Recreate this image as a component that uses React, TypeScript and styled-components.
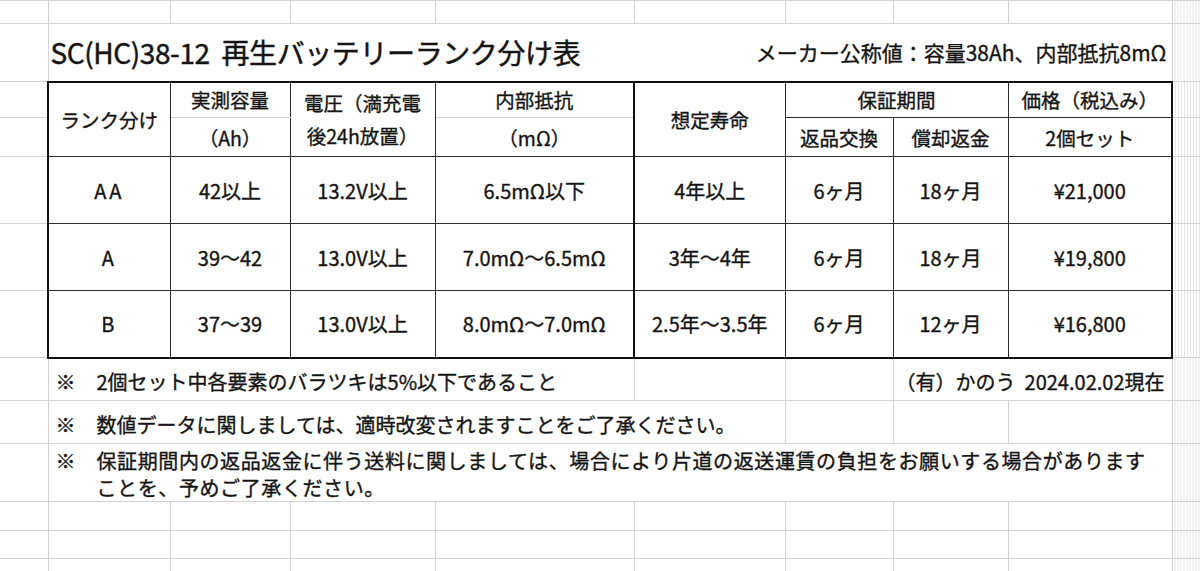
import styled, { createGlobalStyle, css } from 'styled-components';

type Rank = {
  rank: string;
  capacity: string;
  voltage: string;
  resistance: string;
  life: string;
  exchange: string;
  refund: string;
  price: string;
};

const COLUMN_WIDTHS = [48, 122, 120, 145, 199, 151, 108, 115, 164, 28];

const RANKS: Rank[] = [
  {
    rank: 'AA',
    capacity: '42以上',
    voltage: '13.2V以上',
    resistance: '6.5mΩ以下',
    life: '4年以上',
    exchange: '6ヶ月',
    refund: '18ヶ月',
    price: '¥21,000',
  },
  {
    rank: 'A',
    capacity: '39～42',
    voltage: '13.0V以上',
    resistance: '7.0mΩ～6.5mΩ',
    life: '3年～4年',
    exchange: '6ヶ月',
    refund: '18ヶ月',
    price: '¥19,800',
  },
  {
    rank: 'B',
    capacity: '37～39',
    voltage: '13.0V以上',
    resistance: '8.0mΩ～7.0mΩ',
    life: '2.5年～3.5年',
    exchange: '6ヶ月',
    refund: '12ヶ月',
    price: '¥16,800',
  },
];

const BLANK_ROWS = [29, 28, 30];

const GlobalStyle = createGlobalStyle`
  html, body {
    margin: 0;
    padding: 0;
    background: #ffffff;
    overflow: hidden;
  }

  body {
    font-family: 'Noto Sans CJK JP', 'Noto Sans', sans-serif;
    color: #141414;
  }
`;

const App = (): JSX.Element => {
  const emptyRow = (height: number, key: string) => (
    <Row $h={height} key={key}>
      {COLUMN_WIDTHS.map((_, i) => (
        <GridCell key={i} $edge={i === 0} $hatched={i === COLUMN_WIDTHS.length - 1} />
      ))}
    </Row>
  );

  return (
    <>
      <GlobalStyle />
      <Sheet>
        <colgroup>
          {COLUMN_WIDTHS.map((w, i) => (
            <Col key={i} $w={w} />
          ))}
        </colgroup>
        <tbody>
          {emptyRow(23, 'top')}

          <Row $h={58}>
            <GridCell $edge />
            <GridCell colSpan={8}>
              <TitleBar>
                <Title>SC(HC)38-12&nbsp;&nbsp;再生バッテリーランク分け表</Title>
                <Maker>メーカー公称値：容量38Ah、内部抵抗8mΩ</Maker>
              </TitleBar>
            </GridCell>
            <GridCell $hatched />
          </Row>

          <Row $h={36}>
            <GridCell $edge />
            <HeadCell rowSpan={2} $l $t>ランク分け</HeadCell>
            <HeadCell $t $soft>実測容量</HeadCell>
            <HeadCell rowSpan={2} $t>
              電圧（満充電
              <br />
              後24h放置）
            </HeadCell>
            <HeadCell $t $soft>内部抵抗</HeadCell>
            <HeadCell rowSpan={2} $l $t>想定寿命</HeadCell>
            <HeadCell colSpan={2} $t>保証期間</HeadCell>
            <HeadCell $t $r>価格（税込み）</HeadCell>
            <GridCell $hatched />
          </Row>

          <Row $h={39}>
            <GridCell $edge />
            <HeadCell>（Ah）</HeadCell>
            <HeadCell>（mΩ）</HeadCell>
            <HeadCell>返品交換</HeadCell>
            <HeadCell>償却返金</HeadCell>
            <HeadCell $r>2個セット</HeadCell>
            <GridCell $hatched />
          </Row>

          {RANKS.map((item, i) => {
            const last = i === RANKS.length - 1;
            return (
              <Row $h={67} key={item.rank}>
                <GridCell $edge />
                <DataCell $l $b={last} $spaced>{item.rank}</DataCell>
                <DataCell $b={last}>{item.capacity}</DataCell>
                <DataCell $b={last}>{item.voltage}</DataCell>
                <DataCell $b={last}>{item.resistance}</DataCell>
                <DataCell $l $b={last}>{item.life}</DataCell>
                <DataCell $b={last}>{item.exchange}</DataCell>
                <DataCell $b={last}>{item.refund}</DataCell>
                <DataCell $r $b={last}>{item.price}</DataCell>
                <GridCell $hatched />
              </Row>
            );
          })}

          <Row $h={43}>
            <GridCell $edge />
            <NoteCell colSpan={4}>
              <NoteLine>
                <Mark>※</Mark>
                <NoteText>2個セット中各要素のバラツキは5%以下であること</NoteText>
              </NoteLine>
            </NoteCell>
            <GridCell />
            <GridCell />
            <SignCell colSpan={2}>（有）かのう&nbsp;&nbsp;2024.02.02現在</SignCell>
            <GridCell $hatched />
          </Row>

          <Row $h={43}>
            <GridCell $edge />
            <NoteCell colSpan={5}>
              <NoteLine>
                <Mark>※</Mark>
                <NoteText>数値データに関しましては、適時改変されますことをご了承ください。</NoteText>
              </NoteLine>
            </NoteCell>
            <GridCell />
            <GridCell />
            <GridCell />
            <GridCell $hatched />
          </Row>

          <Row $h={55}>
            <GridCell $edge />
            <NoteCell colSpan={8} $top>
              <NoteLine>
                <Mark>※</Mark>
                <NoteText $wide>
                  保証期間内の返品返金に伴う送料に関しましては、場合により片道の返送運賃の負担をお願いする場合があります
                  <br />
                  ことを、予めご了承ください。
                </NoteText>
              </NoteLine>
            </NoteCell>
            <GridCell $hatched />
          </Row>

          {BLANK_ROWS.map((h, i) => emptyRow(h, `blank-${i}`))}
        </tbody>
      </Sheet>
    </>
  );
};

const Sheet = styled.table`
  width: 1200px;
  table-layout: fixed;
  border-collapse: collapse;
  font-size: 20px;
  -webkit-text-stroke: 0.35px #141414;
`;

const Col = styled.col<{ $w: number }>`
  width: ${({ $w }) => $w}px;
`;

const Row = styled.tr<{ $h: number }>`
  height: ${({ $h }) => $h}px;
`;

const GridCell = styled.td<{ $hatched?: boolean; $edge?: boolean }>`
  padding: 0;
  border: 1px solid #d2d2d2;
  ${({ $edge }) => $edge && css`border-left: none;`}
  ${({ $hatched }) =>
    $hatched &&
    css`
      background: repeating-linear-gradient(90deg, #ffffff 0 2px, #e6e6e6 2px 3px);
    `}
`;

const TitleBar = styled.div`
  display: flex;
  align-items: center;
  justify-content: space-between;
  padding: 0 5px 0 2px;
`;

const Title = styled.span`
  font-size: 28px;
  letter-spacing: -0.4px;
  white-space: nowrap;
  -webkit-text-stroke: 0.45px #141414;
`;

const Maker = styled.span`
  font-size: 21px;
  white-space: nowrap;
`;

type EdgeProps = {
  $l?: boolean;
  $r?: boolean;
  $t?: boolean;
  $b?: boolean;
  $soft?: boolean;
};

const TableCell = styled.td<EdgeProps>`
  padding: 0 4px;
  border: 1px solid #2c2c2c;
  text-align: center;
  vertical-align: middle;
  white-space: nowrap;
  font-size: 20px;
  ${({ $l }) => $l && css`border-left: 2px solid #111111;`}
  ${({ $r }) => $r && css`border-right: 2px solid #111111;`}
  ${({ $t }) => $t && css`border-top: 2px solid #111111;`}
  ${({ $b }) => $b && css`border-bottom: 2px solid #111111;`}
  ${({ $soft }) => $soft && css`border-bottom: 1px solid #cfcfcf;`}
`;

const HeadCell = styled(TableCell)`
  font-size: 19.5px;
  line-height: 33px;
`;

const DataCell = styled(TableCell)<{ $spaced?: boolean }>`
  ${({ $spaced }) => $spaced && css`letter-spacing: 3px;`}
`;

const NoteCell = styled.td<{ $top?: boolean }>`
  padding: 0 0 5px 7px;
  border: 1px solid #d2d2d2;
  vertical-align: bottom;
  white-space: nowrap;
  ${({ $top }) =>
    $top &&
    css`
      padding: 3px 0 0 7px;
      vertical-align: top;
    `}
`;

const NoteLine = styled.div`
  display: flex;
  align-items: flex-start;
  line-height: 27px;
`;

const Mark = styled.span`
  flex: 0 0 41px;
`;

const NoteText = styled.span<{ $wide?: boolean }>`
  ${({ $wide }) => $wide && css`letter-spacing: 0.6px;`}
`;

const SignCell = styled.td`
  padding: 0 7px 5px 0;
  border: 1px solid #d2d2d2;
  text-align: right;
  vertical-align: bottom;
  white-space: nowrap;
  line-height: 27px;
`;

export default App;
